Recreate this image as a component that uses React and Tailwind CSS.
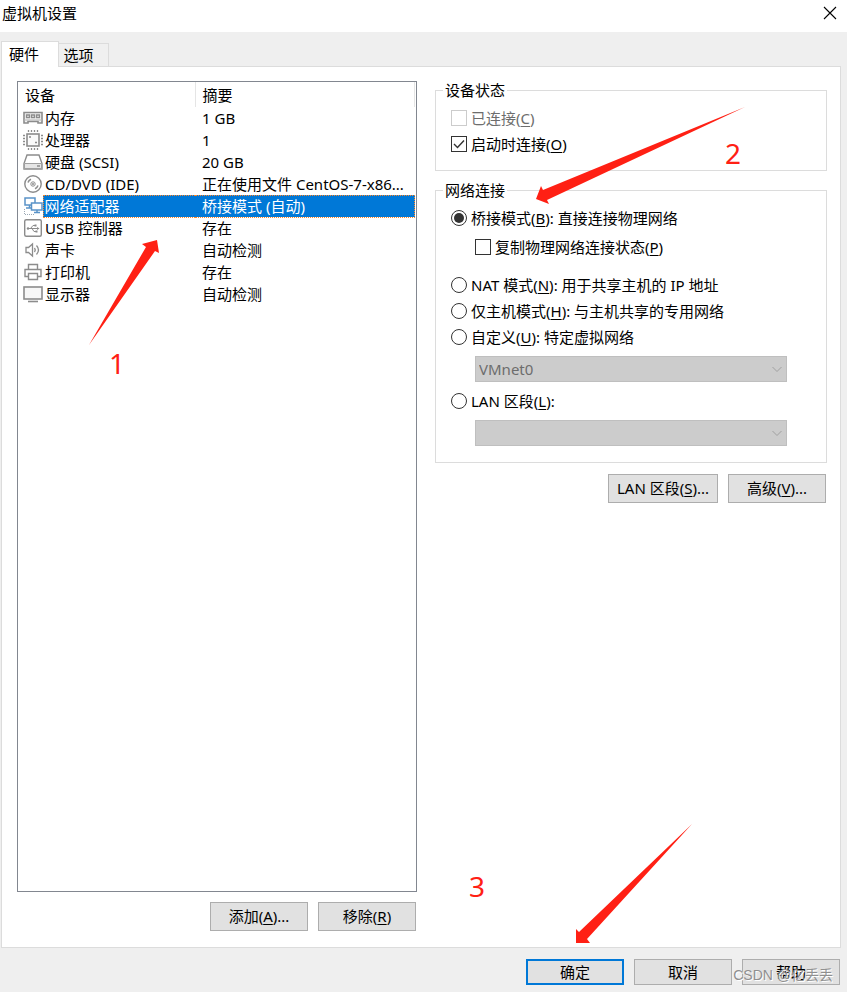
import React from "react";

const MemoryIcon = () => (
  <svg width="20" height="20" viewBox="0 0 20 20" fill="none" stroke="#8c8c8c">
    <path d="M1 4.500h18v10.500h-4v-1.500H5V15H1z" fill="#f3f3f3" strokeWidth="1.600" />
    <path d="M1 12h18" stroke="#b5b5b5" />
    <path d="M3.500 7h3v2.500h-3zM8.500 7h3v2.500h-3zM13.500 7h3v2.500h-3z" strokeWidth="1.300" />
  </svg>
);

const CpuIcon = () => (
  <svg width="20" height="20" viewBox="0 0 20 20" fill="none" stroke="#8c8c8c">
    <rect x="4" y="4" width="12" height="12" strokeWidth="1.600" fill="#fafafa" />
    <path
      d="M5.500 0v2M8.500 0v2M11.500 0v2M14.500 0v2M5.500 18v2M8.500 18v2M11.500 18v2M14.500 18v2M0 5.500h2M0 8.500h2M0 11.500h2M0 14.500h2M18 5.500h2M18 8.500h2M18 11.500h2M18 14.500h2"
      strokeWidth="1.300"
    />
    <path d="M6 7h2M12 12.500h2" strokeWidth="1.500" />
  </svg>
);

const DiskIcon = () => (
  <svg width="20" height="20" viewBox="0 0 20 20" fill="none" stroke="#8c8c8c">
    <path d="M4 3h12l3 8.500V17H1v-5.500z" fill="#fff" strokeWidth="1.400" />
    <path d="M1.500 11.500h17v5h-17z" fill="#e6e6e6" stroke="#a0a0a0" />
    <path d="M14 14h3" strokeWidth="1.500" />
  </svg>
);

const DiscIcon = () => (
  <svg width="20" height="20" viewBox="0 0 20 20" fill="none" stroke="#8c8c8c">
    <circle cx="10" cy="10" r="8.200" strokeWidth="1.400" />
    <circle cx="10" cy="10" r="2.200" />
    <circle cx="10" cy="10" r=".6" fill="#8c8c8c" />
    <path d="M5 8.500a5.500 5.500 0 0 1 3-3.200M15 11.500a5.500 5.500 0 0 1-3 3.200" strokeWidth="1.600" />
  </svg>
);

const NetworkIcon = () => (
  <svg width="20" height="20" viewBox="0 0 20 20" fill="none" stroke="#5a93c8">
    <rect x="2" y="2" width="10" height="7" strokeWidth="1.500" fill="#fff" />
    <path d="M6.500 9v2.500M3 12h6" strokeWidth="1.500" />
    <rect x="8.500" y="7" width="10.500" height="7" strokeWidth="1.500" fill="#fff" />
    <path d="M14 14v2.500M11 16.500h6" strokeWidth="1.500" />
    <path d="M1.500 13v5M2 18.500h10" stroke="#9aa7b4" strokeDasharray="1 1" />
  </svg>
);

const UsbIcon = () => (
  <svg width="20" height="20" viewBox="0 0 20 20" fill="none" stroke="#8c8c8c">
    <rect x="1.700" y="1.700" width="16.600" height="16.600" rx="1.500" strokeWidth="1.400" />
    <path d="M5 10.500h9M7.500 10.500l2.500-3h2M9 10.500l2 3h2.500" />
    <circle cx="5" cy="10.500" r="1.200" fill="#8c8c8c" stroke="none" />
    <path d="M11.500 6.500h2v2h-2zM12.500 12.500h2v2h-2zM14 9l2.500 1.500L14 12z" fill="#8c8c8c" stroke="none" />
  </svg>
);

const SoundIcon = () => (
  <svg width="20" height="20" viewBox="0 0 20 20" fill="none" stroke="#8c8c8c" strokeWidth="1.300">
    <path d="M3 7.500h2.500l4-3.500v12l-4-3.500H3z" />
    <path d="M11.500 8q1.500 2 0 4" />
    <path d="M13.500 5.500q4 4.500 0 9" />
  </svg>
);

const PrinterIcon = () => (
  <svg width="20" height="20" viewBox="0 0 20 20" fill="none" stroke="#8c8c8c" strokeWidth="1.400">
    <path d="M5.500 7V2.500h9V7" />
    <path d="M5 14.500H2V7.500h16v7h-3" />
    <path d="M5.500 11.500h9v6h-9z" fill="#fff" />
  </svg>
);

const DisplayIcon = () => (
  <svg width="20" height="20" viewBox="0 0 20 20" fill="none" stroke="#8c8c8c">
    <rect x="1" y="3" width="18" height="12" strokeWidth="1.600" fill="#f7f7f7" />
    <path d="M5 17.500h10" strokeWidth="1.600" />
  </svg>
);

const devices = [
  { name: "内存", summary: "1 GB", Icon: MemoryIcon },
  { name: "处理器", summary: "1", Icon: CpuIcon },
  { name: "硬盘 (SCSI)", summary: "20 GB", Icon: DiskIcon },
  { name: "CD/DVD (IDE)", summary: "正在使用文件 CentOS-7-x86...", Icon: DiscIcon },
  { name: "网络适配器", summary: "桥接模式 (自动)", Icon: NetworkIcon, selected: true },
  { name: "USB 控制器", summary: "存在", Icon: UsbIcon },
  { name: "声卡", summary: "自动检测", Icon: SoundIcon },
  { name: "打印机", summary: "存在", Icon: PrinterIcon },
  { name: "显示器", summary: "自动检测", Icon: DisplayIcon },
];

const Key = ({ children }) => (
  <>
    (<span className="underline underline-offset-2">{children}</span>)
  </>
);

const Button = ({ className = "", primary = false, children }) => (
  <button
    type="button"
    className={`flex items-center justify-center bg-[#e1e1e1] whitespace-nowrap ${
      primary ? "border-2 border-[#0078d7]" : "border border-[#adadad]"
    } ${className}`}
  >
    {children}
  </button>
);

const Check = ({ className = "", children, ...props }) => (
  <label className={`flex h-[26px] items-center gap-1 whitespace-nowrap ${className}`}>
    <span className="relative flex size-4">
      <input
        type="checkbox"
        className="peer size-4 appearance-none border border-[#333333] bg-white disabled:border-[#cccccc]"
        {...props}
      />
      <svg
        className="pointer-events-none absolute inset-0 hidden peer-checked:block"
        width="16"
        height="16"
        viewBox="0 0 16 16"
        fill="none"
        stroke="#333333"
        strokeWidth="1.4"
      >
        <path d="M3 8l3.500 3.500L13 4.500" />
      </svg>
    </span>
    <span>{children}</span>
  </label>
);

const Radio = ({ className = "", children, ...props }) => (
  <label className={`flex h-[26px] items-center gap-1 whitespace-nowrap ${className}`}>
    <span className="relative flex size-4">
      <input
        type="radio"
        name="network"
        className="peer size-4 appearance-none rounded-full border border-[#333333] bg-white"
        {...props}
      />
      <span className="pointer-events-none absolute inset-[3px] hidden rounded-full bg-[#333333] peer-checked:block" />
    </span>
    <span>{children}</span>
  </label>
);

const Select = ({ label, value }) => (
  <div className="relative mt-[6px] mr-[39px] ml-6">
    <select
      disabled
      aria-label={label}
      className="block h-[26px] w-full appearance-none border border-[#bfbfbf] bg-[#cccccc] px-[3px] text-[#6d6d6d] opacity-100"
    >
      <option>{value}</option>
    </select>
    <svg
      className="pointer-events-none absolute top-[10px] right-[5px]"
      width="10"
      height="7"
      viewBox="0 0 10 7"
      fill="none"
      stroke="#a0a0a0"
    >
      <path d="M.5 1L5 5.500 9.500 1" />
    </svg>
  </div>
);

const Annotations = () => (
  <div className="pointer-events-none absolute inset-0 overflow-hidden text-[28px] leading-7 text-[#ff2014]">
    <svg className="absolute top-0 left-0" width="847" height="992" fill="#ff2014">
      <path d="M89 345L146 247 142 244 157 240 159 253 155 251z" />
      <path d="M745 107L543 190 541 186 536 199 549 204 547 200z" />
      <path d="M692 824L579 932 576 929V943H590L587 939z" />
    </svg>
    <span className="absolute top-[349px] left-[109px]">1</span>
    <span className="absolute top-[139px] left-[725px]">2</span>
    <span className="absolute top-[872px] left-[469px]">3</span>
  </div>
);

const App = () => {
  return (
    <div className="relative flex min-h-screen flex-col bg-[#efefef] font-['Noto_Sans','Noto_Sans_CJK_SC',sans-serif] text-[15px] leading-[18px] text-black">
      {/* Title bar */}
      <header className="flex h-8 items-start justify-between bg-white pt-1 pr-[10px] pl-[2px]">
        <h1>虚拟机设置</h1>
        <button type="button" aria-label="关闭" className="mt-[2px]">
          <svg width="14" height="14" viewBox="0 0 14 14" stroke="#000" strokeWidth="1.1">
            <path d="M1 1l12 12M13 1L1 13" />
          </svg>
        </button>
      </header>

      {/* Tabs */}
      <div role="tablist" className="flex items-end pt-[9px] pl-px">
        <button
          type="button"
          role="tab"
          aria-selected="true"
          className="z-1 -mb-px h-[26px] w-[58px] border border-b-0 border-[#dcdcdc] bg-white pr-3 pb-[2px]"
        >
          硬件
        </button>
        <button
          type="button"
          role="tab"
          aria-selected="false"
          className="-ml-px h-[23px] w-[51px] border border-b-0 border-[#dcdcdc] bg-[#f0f0f0] pr-[10px]"
        >
          选项
        </button>
      </div>

      {/* Tab panel */}
      <main className="mr-[6px] ml-px grid flex-1 grid-cols-[400fr_392fr] gap-[18px] border border-[#dcdcdc] bg-white pt-[14px] pr-[13px] pb-4 pl-[15px]">
        <section className="flex flex-col">
          <div className="flex-1 border border-[#828790] pr-px">
            <table className="w-full table-fixed border-collapse">
              <colgroup>
                <col className="w-[25px]" />
                <col className="w-[152px]" />
                <col />
              </colgroup>
              <thead>
                <tr className="h-[25px] text-left">
                  <th colSpan={2} className="border-r border-[#e5e5e5] p-0 pl-[7px] font-normal">
                    设备
                  </th>
                  <th className="border-r border-[#e5e5e5] p-0 pl-[7px] font-normal">摘要</th>
                </tr>
              </thead>
              <tbody>
                {devices.map(({ name, summary, Icon, selected }) => (
                  <tr key={name} className="h-[22px] whitespace-nowrap">
                    <td className="p-0 pl-[5px]">
                      <Icon />
                    </td>
                    <td
                      className={
                        selected
                          ? "border border-r-0 border-dotted border-[#ff8728] bg-[#0078d7] p-0 pl-px text-white"
                          : "p-0 pl-[2px]"
                      }
                    >
                      {name}
                    </td>
                    <td
                      className={
                        selected
                          ? "border border-l-0 border-dotted border-[#ff8728] bg-[#0078d7] p-0 pl-[7px] text-white"
                          : "p-0 pl-[7px]"
                      }
                    >
                      {summary}
                    </td>
                  </tr>
                ))}
              </tbody>
            </table>
          </div>
          <div className="mt-[10px] flex justify-end gap-[10px] pr-px">
            <Button className="h-[29px] w-[98px] pb-[2px]">
              添加
              <Key>A</Key>...
            </Button>
            <Button className="h-[29px] w-[98px] pb-[2px]">
              移除
              <Key>R</Key>
            </Button>
          </div>
        </section>

        <section>
          <fieldset className="border border-[#dcdcdc] px-[15px] pt-[6px] pb-[13px]">
            <legend className="-ml-2 px-[2px]">设备状态</legend>
            <Check disabled className="text-[#6d6d6d]">
              已连接
              <Key>C</Key>
            </Check>
            <Check defaultChecked>
              启动时连接
              <Key>O</Key>
            </Check>
          </fieldset>

          <fieldset className="mt-[10px] border border-[#dcdcdc] pt-[6px] pb-4 pl-[15px]">
            <legend className="-ml-2 px-[2px]">网络连接</legend>
            <Radio defaultChecked>
              桥接模式
              <Key>B</Key>: 直接连接物理网络
            </Radio>
            <Check className="mt-[3px] ml-6">
              复制物理网络连接状态
              <Key>P</Key>
            </Check>
            <Radio className="mt-3">
              NAT 模式
              <Key>N</Key>: 用于共享主机的 IP 地址
            </Radio>
            <Radio>
              仅主机模式
              <Key>H</Key>: 与主机共享的专用网络
            </Radio>
            <Radio>
              自定义
              <Key>U</Key>: 特定虚拟网络
            </Radio>
            <Select label="特定虚拟网络" value="VMnet0" />
            <Radio className="mt-[6px]">
              LAN 区段
              <Key>L</Key>:
            </Radio>
            <Select label="LAN 区段" value="" />
          </fieldset>

          <div className="mt-[11px] flex justify-end gap-[10px] pr-px">
            <Button className="h-[29px] w-[110px] pb-[2px]">
              LAN 区段
              <Key>S</Key>...
            </Button>
            <Button className="h-[29px] w-[98px] pb-[2px]">
              高级
              <Key>V</Key>...
            </Button>
          </div>
        </section>
      </main>

      {/* Dialog buttons */}
      <footer className="relative flex justify-end gap-[10px] pt-[11px] pr-[7px] pb-[7px]">
        <Button primary className="h-[26px] w-[98px]">
          确定
        </Button>
        <Button className="h-[26px] w-[98px]">取消</Button>
        <Button className="h-[26px] w-[98px]">帮助</Button>
        <span className="pointer-events-none absolute right-[14px] bottom-2 font-['Liberation_Sans','Noto_Sans_CJK_SC',sans-serif] text-[14px] whitespace-nowrap text-[#8f8f8f] [text-shadow:1px_1px_0_#ffffff]">
          CSDN @亿丢丢
        </span>
      </footer>

      <Annotations />
    </div>
  );
};

export default App;
